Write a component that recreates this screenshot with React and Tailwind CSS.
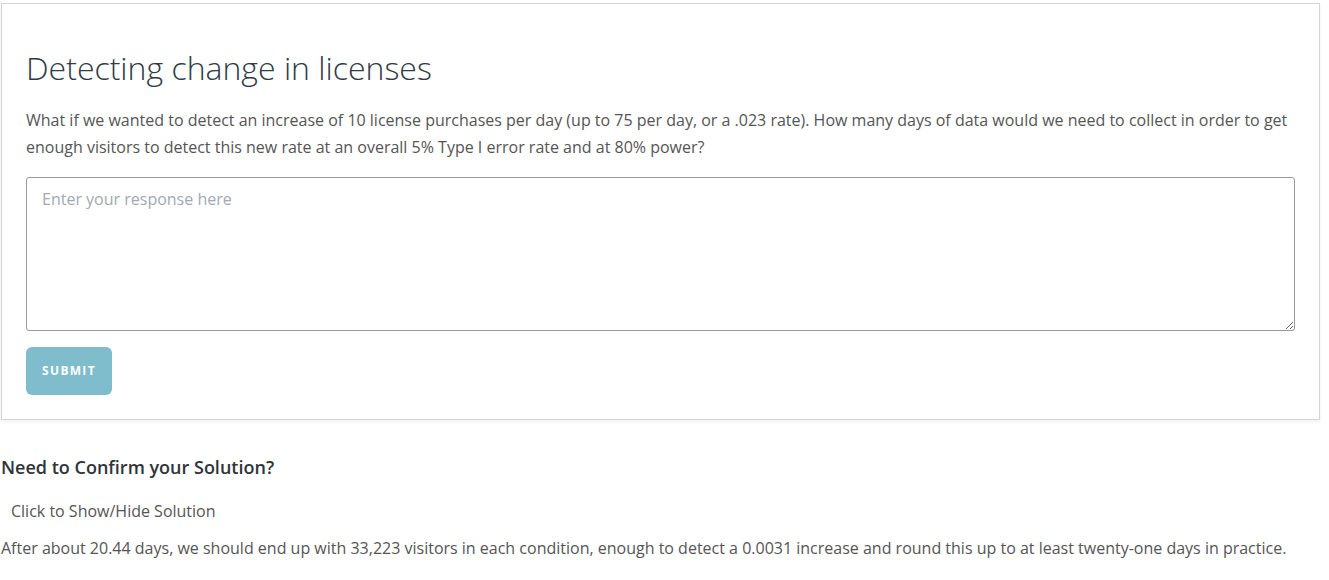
export default function App() {
  return (
    <div className="w-[1320px] pt-[3px] pl-px font-['Open_Sans',sans-serif] text-[#555]">
      <div className="border border-[#d4d4d4] bg-white shadow-[0_2px_4px_rgba(0,0,0,0.06)] px-[24px] pt-[42px] pb-[24px]">
        <h2 className="text-[32px] font-light leading-[44px] text-[#2f3b45] mb-[17px]">
          Detecting change in licenses
        </h2>
        <p className="text-[16px] leading-[27px] mb-[16px]">
          What if we wanted to detect an increase of 10 license purchases per day (up to 75 per day, or a .023 rate). How many days of data would we need to collect in order to get enough visitors to detect this new rate at an overall 5% Type I error rate and at 80% power?
        </p>
        <textarea
          className="block w-full h-[154px] border border-[#9a9a9a] rounded-[3px] px-[15px] py-[10px] text-[16px] leading-[22px] text-[#555] placeholder:text-[#a1a9b3] outline-none"
          placeholder="Enter your response here"
        />
        <button className="mt-[16px] w-[86px] h-[48px] rounded-[6px] bg-[#7fbccc] text-white text-[12px] font-bold tracking-[1.3px]">
          SUBMIT
        </button>
      </div>
      <div className="pt-[35px] -ml-px pl-px">
        <h3 className="text-[18px] font-semibold text-[#2f3438] leading-[24px]">
          Need to Confirm your Solution?
        </h3>
        <div className="mt-[21px] pl-[10px] text-[16px] leading-[22px]">Click to Show/Hide Solution</div>
        <p className="mt-[15px] text-[16px] leading-[22px]">
          After about 20.44 days, we should end up with 33,223 visitors in each condition, enough to detect a 0.0031 increase and round this up to at least twenty-one days in practice.
        </p>
      </div>
    </div>
  );
}
